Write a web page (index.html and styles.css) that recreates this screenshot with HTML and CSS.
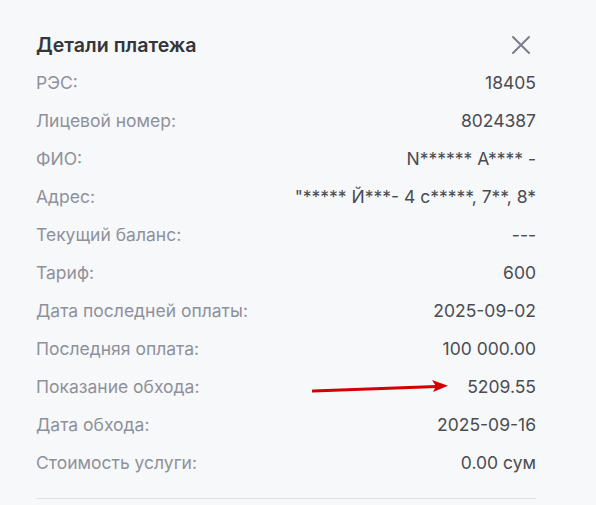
FILE: index.html
```html
<!DOCTYPE html>
<html lang="ru">
<head>
    <meta charset="UTF-8">
    <title>Детали платежа</title>
    <link rel="stylesheet" href="styles.css">
</head>
<body>
<div class="modal">
    <div class="modal-head">
        <span class="modal-title">Детали платежа</span>
        <span class="close">
            <svg width="20" height="20" viewBox="0 0 20 20">
                <path d="M2 2 L18 18 M18 2 L2 18" stroke="#7b7e87" stroke-width="2" stroke-linecap="round"/>
            </svg>
        </span>
    </div>
    <div class="rows">
        <div class="row"><span class="label">РЭС:</span><span class="value">18405</span></div>
        <div class="row"><span class="label">Лицевой номер:</span><span class="value">8024387</span></div>
        <div class="row"><span class="label">ФИО:</span><span class="value">N****** A**** -</span></div>
        <div class="row"><span class="label">Адрес:</span><span class="value">"***** Й***- 4 с*****, 7**, 8*</span></div>
        <div class="row"><span class="label">Текущий баланс:</span><span class="value">---</span></div>
        <div class="row"><span class="label">Тариф:</span><span class="value">600</span></div>
        <div class="row"><span class="label">Дата последней оплаты:</span><span class="value">2025-09-02</span></div>
        <div class="row"><span class="label">Последняя оплата:</span><span class="value">100 000.00</span></div>
        <div class="row"><span class="label">Показание обхода:</span><span class="value">5209.55</span></div>
        <div class="row"><span class="label">Дата обхода:</span><span class="value">2025-09-16</span></div>
        <div class="row"><span class="label">Стоимость услуги:</span><span class="value">0.00 сум</span></div>
    </div>
    <div class="divider"></div>

    <!-- red pointer drawn over the screenshot -->
    <svg class="arrow" width="150" height="20" viewBox="0 0 150 20">
        <path d="M1 13 L125 8.5" stroke="#d40000" stroke-width="3.2" stroke-linecap="round"/>
        <path d="M120 2 L136 7.8 L121 14 L124 8.3 Z" fill="#d40000"/>
    </svg>
</div>
</body>
</html>
```

FILE: styles.css
```css
body {
    margin: 0;
    padding: 0;
    background: #f7f8fa;
    font-family: Inter, "Noto Sans", sans-serif;
}

.modal {
    position: relative;
    width: 500px;
    padding: 27px 36px 0;
}

.modal-head {
    height: 36px;
    display: flex;
    align-items: center;
    justify-content: space-between;
}

.modal-title {
    font-size: 19.6px;
    font-weight: 600;
    color: #34363b;
}

.close {
    display: flex;
    margin-right: 5px;
}

.row {
    height: 38px;
    display: flex;
    align-items: center;
    justify-content: space-between;
    font-size: 17.5px;
}

.label {
    color: #8e919a;
}

.value {
    color: #4a4c52;
}

.divider {
    margin-top: 17px;
    border-top: 1px solid #dfe0e4;
}

.arrow {
    position: absolute;
    left: 312px;
    top: 378px;
}
```
